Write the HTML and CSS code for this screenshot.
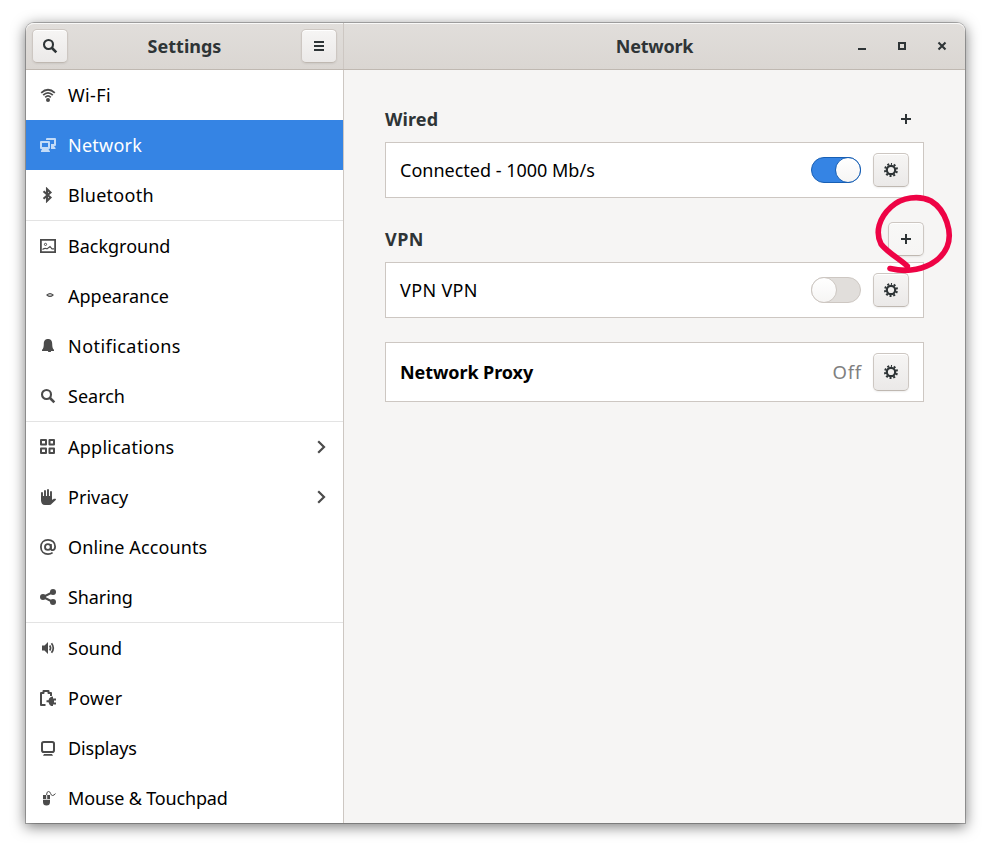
FILE: index.html
```html
<!DOCTYPE html>
<html lang="en">
<head>
<meta charset="utf-8">
<title>Settings</title>
<link rel="stylesheet" href="styles.css">
</head>
<body>
<svg class="defs" width="0" height="0" aria-hidden="true">
  <symbol id="search" viewBox="0 0 16 16"><circle cx="6.5" cy="6.5" r="4.5" fill="none" stroke="currentColor" stroke-width="2.1"/><path d="M10 10l4.3 4.3" stroke="currentColor" stroke-width="2.6"/></symbol>
  <symbol id="gear" viewBox="0 0 16 16"><circle cx="8" cy="8" r="4.2" fill="none" stroke="currentColor" stroke-width="2.2"/><circle cx="8" cy="8" r="6" fill="none" stroke="currentColor" stroke-width="2" stroke-dasharray="2 1.770" stroke-dashoffset="1" transform="rotate(-90 8 8)"/></symbol>
  <symbol id="plus" viewBox="0 0 16 16"><path d="M7 3h2v4h4v2H9v4H7V9H3V7h4z" fill="currentColor"/></symbol>
  <symbol id="chevron" viewBox="0 0 16 16"><path d="M5.2 2.3L11 8l-5.8 5.7" fill="none" stroke="currentColor" stroke-width="2.2"/></symbol>
</svg>
<div class="window">
  <header class="titlebar">
    <div class="side-title">
      <button class="btn head-btn" aria-label="Search"><svg class="icon"><use href="#search"/></svg></button>
      <h1 class="title">Settings</h1>
      <button class="btn head-btn" aria-label="Menu"><svg class="icon" viewBox="0 0 16 16"><path d="M3 3h10v2H3zM3 7h10v2H3zM3 11h10v2H3z" fill="currentColor"/></svg></button>
    </div>
    <div class="main-title">
      <h2 class="title tight">Network</h2>
      <div class="controls">
        <svg class="icon" viewBox="0 0 16 16"><path d="M4 10h8v2H4z" fill="currentColor"/></svg>
        <svg class="icon" viewBox="0 0 16 16"><path d="M5 5h6v6H5z" fill="none" stroke="currentColor" stroke-width="2"/></svg>
        <svg class="icon" viewBox="0 0 16 16"><path d="M4.500 4.500l7 7M11.500 4.500l-7 7" stroke="currentColor" stroke-width="2.1"/></svg>
      </div>
    </div>
  </header>
  <div class="body">
    <nav class="sidebar">
      <div class="group">
        <a class="row"><svg class="icon" viewBox="0 0 16 16"><g fill="none" stroke="currentColor"><path d="M1.200 5.800Q8-.2 14.800 5.800" stroke-width="1.800"/><path d="M3.200 8.200Q8 3.600 12.800 8.200" stroke-width="1.800"/><path d="M5.200 10.300Q8 7.500 10.800 10.300" stroke-width="1.700"/></g><circle cx="8" cy="13" r="2" fill="currentColor"/></svg><span class="s4">Wi-Fi</span></a>
        <a class="row selected"><svg class="icon" viewBox="0 0 16 16"><path fill="currentColor" fill-rule="evenodd" d="M1 4h8a1 1 0 0 1 1 1v6a1 1 0 0 1-1 1H8.500L10 14.500V15H1v-1l1-2H1a1 1 0 0 1-1-1V5a1 1 0 0 1 1-1zM2 6v4h6V6z"/><path fill="currentColor" d="M6 3V2a1 1 0 0 1 1-1h8a1 1 0 0 1 1 1v6a1 1 0 0 1-1 1h-1l1.500 2v1H11V7h3V3z"/></svg><span class="s3">Network</span></a>
        <a class="row"><svg class="icon" viewBox="0 0 16 16"><path d="M3.500 4.200l7 6.300-3.500 3.400V2.100l3.500 3.400-7 6.300" fill="none" stroke="currentColor" stroke-width="2.100"/></svg><span class="s3">Bluetooth</span></a>
      </div>
      <div class="group">
        <a class="row"><svg class="icon" viewBox="0 0 16 16"><path d="M.9 1.900h14.200v12.200H.9z" fill="none" stroke="currentColor" stroke-width="1.800"/><circle cx="5.500" cy="6.400" r="1.100" fill="none" stroke="currentColor"/><path d="M2.500 11.500q2.500-1.800 4.500-.6l3-2.400 2 2.400h2" fill="none" stroke="currentColor" stroke-width="1.100"/></svg><span>Background</span></a>
        <a class="row"><svg class="icon" viewBox="0 0 16 16"><path d="M7 7Q10 4.300 13 7Q10 9.700 7 7z" fill="none" stroke="currentColor" stroke-width="1.200"/><circle cx="10" cy="7" r=".6" fill="currentColor" opacity=".5"/></svg><span>Appearance</span></a>
        <a class="row"><svg class="icon" viewBox="0 0 16 16"><path d="M8 1c3.200 0 4.200 2.300 4.200 5 0 3 .6 4.800 1.800 5.800V13H2v-1.200C3.200 10.800 3.800 9 3.800 6c0-2.700 1-5 4.200-5z" fill="currentColor"/><path d="M8 13h3v.7q-1.400.8-3 0z" fill="currentColor"/></svg><span class="s5">Notifications</span></a>
        <a class="row"><svg class="icon"><use href="#search"/></svg><span>Search</span></a>
      </div>
      <div class="group">
        <a class="row"><svg class="icon" viewBox="0 0 16 16"><path d="M1 1h5v4.500H1zM9.500 1H14v4.500H9.500zM1 9.500h5V14H1zM9.500 9.500H14V14H9.500z" fill="none" stroke="currentColor" stroke-width="2" stroke-linejoin="round"/></svg><span class="s3">Applications</span><svg class="icon go"><use href="#chevron"/></svg></a>
        <a class="row"><svg class="icon" viewBox="0 0 16 16"><path d="M2 4v7M5 2v8M8 1v9M11 3v8" stroke="currentColor" stroke-width="1.900" stroke-linecap="round"/><path d="M1 7h11v4c1-1 2-1.700 3.500-1.200.8.300.6.900 0 1.400L12 14.500q-1 1.500-3 1.500H5q-4 0-4-5z" fill="currentColor"/></svg><span class="s1">Privacy</span><svg class="icon go"><use href="#chevron"/></svg></a>
        <a class="row"><svg class="icon" viewBox="0 0 16 16"><g fill="none" stroke="currentColor"><circle cx="7.900" cy="8" r="2.900" stroke-width="1.900"/><path d="M10.900 5v4.200q0 1.900 1.700 1.900c1.600 0 2.500-1.300 2.500-3.500C15.100 3.500 12.100.9 8 .9S.9 3.700.9 8s3 7.100 7.100 7.100q2.600 0 4.600-1.500" stroke-width="1.800"/></g></svg><span class="s2">Online Accounts</span></a>
        <a class="row"><svg class="icon" viewBox="0 0 16 16"><path d="M13 3L3 8l10 5" fill="none" stroke="currentColor" stroke-width="2"/><g fill="currentColor"><circle cx="3" cy="8" r="3"/><circle cx="13" cy="3" r="3"/><circle cx="13" cy="13" r="3"/></g></svg><span class="n1">Sharing</span></a>
      </div>
      <div class="group">
        <a class="row"><svg class="icon" viewBox="0 0 16 16"><path d="M2 5.500h2.500L8 2v12l-3.500-3.500H2z" fill="currentColor"/><path d="M9.700 5.500q1.800 2.500 0 5" fill="none" stroke="currentColor" stroke-width="1.700"/><path d="M11.500 3.200q3.600 4.800 0 9.600" fill="none" stroke="currentColor" stroke-width="1.700"/></svg><span>Sound</span></a>
        <a class="row"><svg class="icon" viewBox="0 0 16 16"><path d="M5.500 15H1V3h2.500V1h5v2H11v3" fill="none" stroke="currentColor" stroke-width="2" stroke-linejoin="round"/><path d="M6.500 10.200h2Q9.500 6.500 13 6.500V8.500h3v2h-2v2h2v2h-3V16.300q-3.500 0-4.500-4h-2z" fill="currentColor"/></svg><span class="s3">Power</span></a>
        <a class="row"><svg class="icon" viewBox="0 0 16 16"><rect x="2" y="2" width="12" height="10" rx="1.800" fill="none" stroke="currentColor" stroke-width="2"/><path d="M4 14h8l1 1.800H3z" fill="currentColor"/></svg><span class="n2">Displays</span></a>
        <a class="row"><svg class="icon" viewBox="0 0 16 16"><path d="M3 5h3.200v4H3zM7.200 5H10v4H7.200zM3 9.800h7V12q0 3.500-3.500 3.500T3 12z" fill="currentColor"/><path d="M6.600 5q-.2-3.500 2-3.500c2.400 0 1.700 4 3.800 4q2 0 3-2" fill="none" stroke="currentColor"/></svg><span class="n2">Mouse &amp; Touchpad</span></a>
      </div>
    </nav>
    <main class="content">
      <div class="section-head"><h3 class="s2">Wired</h3><button class="btn flat" aria-label="Add wired"><svg class="icon"><use href="#plus"/></svg></button></div>
      <section class="card"><span>Connected - 1000 Mb/s</span><span class="switch on"></span><button class="btn" aria-label="Options"><svg class="icon"><use href="#gear"/></svg></button></section>
      <div class="section-head second"><h3 class="s5">VPN</h3>
        <div class="add"><button class="btn hover" aria-label="Add VPN"><svg class="icon"><use href="#plus"/></svg></button>
          <svg class="marker" viewBox="0 0 90 90"><path d="M39.300 76C30 68 19 62 13 54C7 42 11 28 23 17C34 7 51 5 63 11C78 20 85 43 79 57C72 73 50 85 22 78.500" fill="none" stroke="#ee0345" stroke-width="5.600" stroke-linecap="round" stroke-linejoin="round"/></svg></div>
      </div>
      <section class="card"><span class="s4">VPN VPN</span><span class="switch"></span><button class="btn" aria-label="Options"><svg class="icon"><use href="#gear"/></svg></button></section>
      <section class="card proxy"><strong class="n1">Network Proxy</strong><span class="status">Off</span><button class="btn" aria-label="Options"><svg class="icon"><use href="#gear"/></svg></button></section>
    </main>
  </div>
</div>
</body>
</html>
```
FILE: styles.css
```css
*, ::before, ::after { box-sizing: border-box; }
body {
  margin: 0;
  height: 852px;
  padding: 23px 26px;
  overflow: hidden;
  background: #fff;
  color: #000;
  font: 18px/24px "Noto Sans", "Open Sans", sans-serif;
}
.defs { position: absolute; }
h1, h2, h3 { margin: 0; font-size: 18px; line-height: 24px; font-weight: 700; color: #2e3436; }
.icon { display: block; width: 16px; height: 16px; flex: none; }

.window {
  width: 939px;
  height: 800px;
  border-radius: 8px 8px 0 0;
  background: #f6f5f4;
  box-shadow: 0 0 0 1px rgba(0, 0, 0, .25), 0 3px 14px 1px rgba(0, 0, 0, .5);
}
.titlebar {
  display: flex;
  height: 47px;
  border-bottom: 1px solid #bfb8b1;
  border-radius: 8px 8px 0 0;
  background: linear-gradient(#e1dedb, #dad6d2);
  box-shadow: inset 0 1px rgba(255, 255, 255, .8);
  color: #2e3436;
}
.side-title {
  display: flex;
  align-items: center;
  justify-content: space-between;
  width: 318px;
  padding: 0 6px;
  border-right: 1px solid #cdc7c2;
}
.main-title {
  display: grid;
  grid-template-columns: 1fr auto 1fr;
  align-items: center;
  flex: 1;
}
.main-title .title { grid-column: 2; }
.controls { display: flex; gap: 24px; justify-self: end; padding-right: 15px; }
.tight { letter-spacing: -.25px; }

.btn {
  display: grid;
  place-items: center;
  width: 36px;
  height: 34px;
  padding: 0;
  border: 1px solid #cdc7c2;
  border-bottom-color: #bfb8b1;
  border-radius: 5px;
  background: linear-gradient(#f6f5f4, #ebe9e8);
  box-shadow: inset 0 1px #fff, 0 1px 2px rgba(0, 0, 0, .07);
  color: #2e3436;
}
.btn.flat { border-color: transparent; background: none; box-shadow: none; }
.btn.hover { background: linear-gradient(#f8f8f7, #f6f5f4); }

.body { display: flex; height: 753px; }
.sidebar { width: 318px; border-right: 1px solid #cdc7c2; background: #fff; }
.group + .group { border-top: 1px solid #e3e3e3; }
.row { display: flex; align-items: center; gap: 12px; height: 50px; padding: 0 14px; }
.row .icon { color: #4b4b4b; }
.row .go { margin-left: auto; }
.row.selected { background: #3584e4; color: #fff; }
.row.selected .icon { color: #c3dbf7; }

.s1 { letter-spacing: .04px; }
.s2 { letter-spacing: .12px; }
.s3 { letter-spacing: .25px; }
.s4 { letter-spacing: .35px; }
.s5 { letter-spacing: .45px; }
.n1 { letter-spacing: -.08px; }
.n2 { letter-spacing: -.17px; }

.content { flex: 1; padding: 32px 41px 0; }
.section-head {
  display: flex;
  align-items: center;
  justify-content: space-between;
  height: 34px;
  margin-bottom: 6px;
}
.second { margin-top: 24px; }
.card {
  display: flex;
  align-items: center;
  height: 56px;
  padding: 0 14px;
  border: 1px solid #cdc7c2;
  background: #fff;
}
.card > :first-child { margin-right: auto; }
.proxy { height: 60px; margin-top: 24px; }
.proxy .btn { height: 38px; }
.status { margin-right: 11px; color: #808080; font-size: 18.5px; letter-spacing: .8px; }

.switch {
  display: flex;
  width: 50px;
  height: 26px;
  margin-right: 12px;
  border: 1px solid #cdc7c2;
  border-radius: 13px;
  background: #e1dedb;
}
.switch::after {
  content: "";
  width: 26px;
  height: 26px;
  margin: -1px;
  border: 1px solid #cdc7c2;
  border-radius: 50%;
  background: linear-gradient(#fff, #f6f5f4);
}
.switch.on { justify-content: flex-end; border-color: #185fb4; background: #3584e4; }
.switch.on::after { border-color: #185fb4; }

.add { position: relative; }
.marker {
  position: absolute;
  left: -20px;
  top: -32px;
  width: 90px;
  height: 90px;
  pointer-events: none;
}
```
